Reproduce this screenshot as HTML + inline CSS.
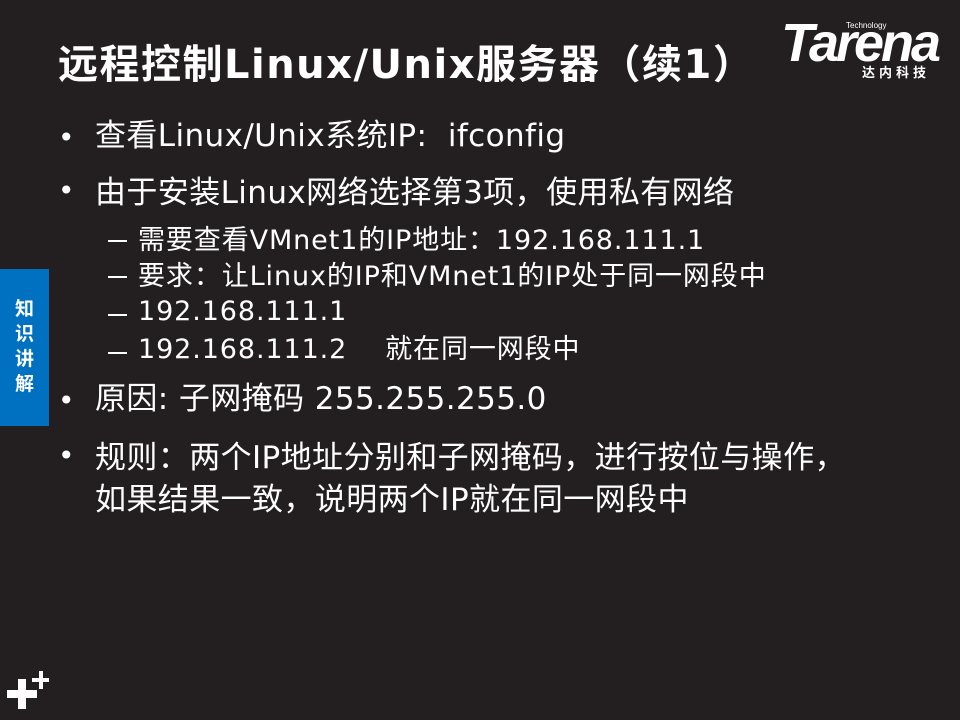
<!DOCTYPE html>
<html><head><meta charset="utf-8"><style>
body{margin:0;width:960px;height:720px;background:#231f20;overflow:hidden;position:relative;font-family:"DejaVu Sans","Noto Sans CJK SC",sans-serif;color:#fff}
.t{position:absolute;white-space:nowrap;line-height:1}
.c{font-family:"Noto Sans CJK SC",sans-serif}
.h{left:58px;top:41px;font-size:40px;font-weight:bold;letter-spacing:1.5px}
.l1{font-size:31px;left:95px;letter-spacing:0.4px}
.l2{font-size:27px;left:138px;letter-spacing:0.9px}
.b{position:absolute;left:58px;font-size:28px}
.d{position:absolute;left:108px;width:19px;height:2px;background:#fff}
.tab{position:absolute;left:0;top:269px;width:49px;height:157px;background:#0070c0}
.tab div{position:absolute;left:0;width:49px;text-align:center;font-size:19px;font-weight:bold;line-height:24px}
.p{position:absolute;background:#fff}
</style></head><body>
<div class="t h">远程控制Linux/Unix服务器<span class="c">（</span>续1<span class="c">）</span></div>
<div class="t" style="left:781px;top:16px;font-size:54px;font-weight:bold;font-style:italic;letter-spacing:-3px;font-family:'Liberation Sans',sans-serif">Tarena</div>
<div class="t" style="left:846px;top:22px;font-size:8px;font-family:'Liberation Sans',sans-serif">Technology</div>
<div class="t" style="left:862px;top:67px;font-size:13px;font-weight:bold;letter-spacing:4px">达内科技</div>

<div class="t b" style="top:124px">•</div><div class="t l1" style="top:121px">查看Linux/Unix系统IP:&nbsp; ifconfig</div>
<div class="t b" style="top:177px">•</div><div class="t l1" style="top:174px">由于安装Linux网络选择第3项<span class="c">，</span>使用私有网络</div>
<div class="d" style="top:240px"></div><div class="t l2" style="top:224px">需要查看VMnet1的IP地址<span class="c">：</span>192.168.111.1</div>
<div class="d" style="top:276px"></div><div class="t l2" style="top:260px">要求<span class="c">：</span>让Linux的IP和VMnet1的IP处于同一网段中</div>
<div class="d" style="top:314px"></div><div class="t l2" style="top:298px">192.168.111.1</div>
<div class="d" style="top:352px"></div><div class="t l2" style="top:336px">192.168.111.2&nbsp;&nbsp;&nbsp; 就在同一网段中</div>
<div class="t b" style="top:387px">•</div><div class="t l1" style="top:384px">原因: 子网掩码 255.255.255.0</div>
<div class="t b" style="top:442px">•</div><div class="t l1" style="top:439px">规则<span class="c">：</span>两个IP地址分别和子网掩码<span class="c">，</span>进行按位与操作<span class="c">，</span></div>
<div class="t l1" style="top:481px">如果结果一致<span class="c">，</span>说明两个IP就在同一网段中</div>

<div class="tab"><div style="top:28px">知</div><div style="top:53px">识</div><div style="top:78px">讲</div><div style="top:103px">解</div></div>

<div class="p" style="left:7px;top:690px;width:30px;height:8px"></div>
<div class="p" style="left:18px;top:679px;width:8px;height:30px"></div>
<div class="p" style="left:32px;top:678px;width:17px;height:4px"></div>
<div class="p" style="left:38.5px;top:671px;width:4px;height:18px"></div>
</body></html>
